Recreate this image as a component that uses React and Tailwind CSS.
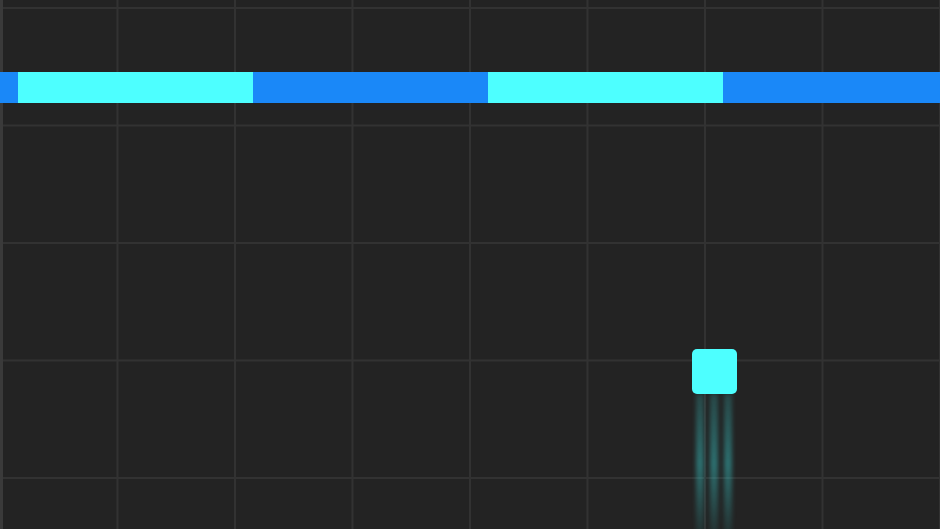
export default function App() {
  const trails = [700, 714, 728];
  return (
    <div className="relative h-[529px] w-[940px] overflow-hidden bg-[#232323]">
      <div className="absolute inset-0 bg-[linear-gradient(to_right,#323232_2px,transparent_2px),linear-gradient(to_bottom,#323232_2px,transparent_2px)] bg-[size:117.5px_117.5px] bg-[position:-1px_7px]" />
      <div className="absolute left-0 top-0 h-full w-[3px] bg-[#3a3a3a]" />
      <div className="absolute left-0 right-0 top-[72px] flex h-[31px]">
        <div className="w-[18px] bg-[#1a88f8]" />
        <div className="w-[235px] bg-[#4dffff]" />
        <div className="w-[235px] bg-[#1a88f8]" />
        <div className="w-[235px] bg-[#4dffff]" />
        <div className="flex-1 bg-[#1a88f8]" />
      </div>
      {trails.map((x) => (
        <div
          key={x}
          className="absolute top-[394px] h-[140px] w-[8px] -translate-x-1/2 bg-gradient-to-b from-[rgba(60,220,220,0.2)] via-[rgba(60,220,220,0.42)] to-[rgba(60,220,220,0.08)] blur-[2px]"
          style={{ left: x }}
        />
      ))}
      <div className="absolute left-[692px] top-[349px] h-[45px] w-[45px] rounded-[5px] bg-[#4dffff]" />
    </div>
  );
}
